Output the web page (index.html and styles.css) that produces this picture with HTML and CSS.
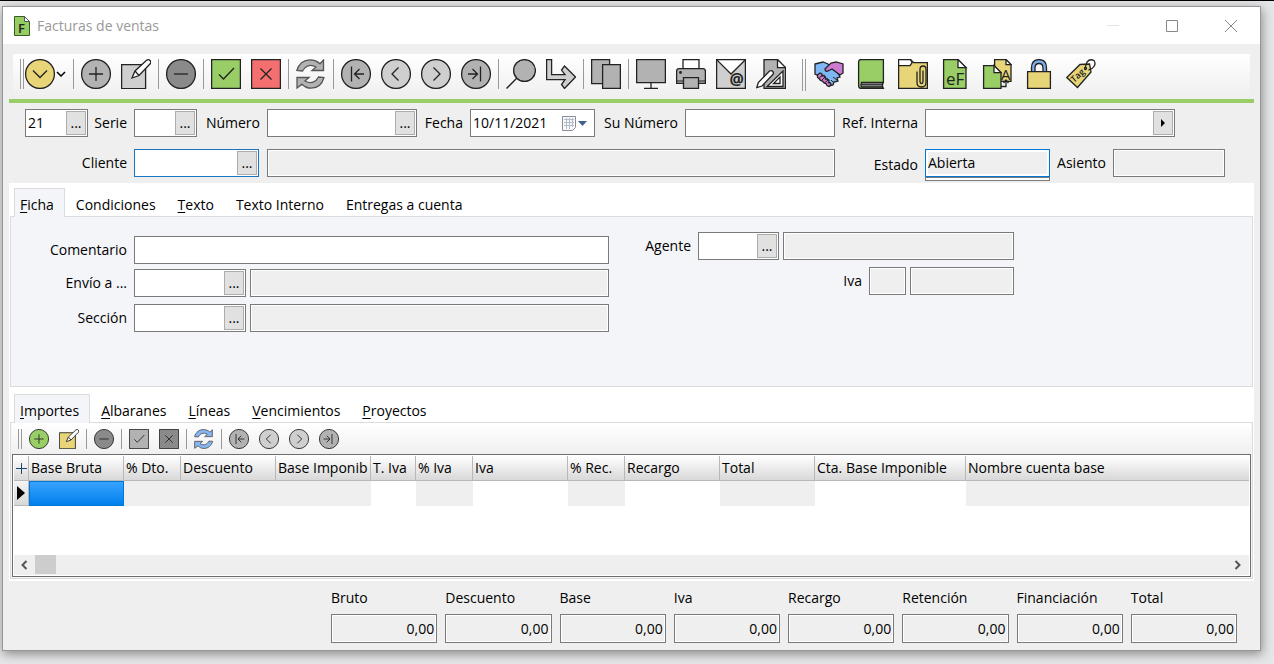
FILE: index.html
```html
<!DOCTYPE html>
<html lang="es">
<head>
<meta charset="utf-8">
<title>Facturas de ventas</title>
<link rel="stylesheet" href="styles.css">
</head>
<body>
<svg class="sprite" aria-hidden="true">
  <symbol id="plus" viewBox="0 0 30 30"><circle class="fill" cx="15" cy="15" r="14.4"/><path d="M15 8v14M8 15h14"/></symbol>
  <symbol id="minus" viewBox="0 0 30 30"><circle class="fill" cx="15" cy="15" r="14.4"/><path d="M8 15h14"/></symbol>
  <symbol id="edit" viewBox="0 0 30 30"><path class="fill" d="M.6 5.6h24v24H.6z"/><path fill="#fff" d="M11 19l3-7L25.5 1.200q2-1.200 3.500.300t.200 3.300L18 16.500z"/><path d="M14 12l4 4.500"/></symbol>
  <symbol id="check" viewBox="0 0 30 30"><path class="fill" d="M.6.6h28.800v28.800H.6z"/><path d="M8 15.500l4.500 4.500L23 9"/></symbol>
  <symbol id="cross" viewBox="0 0 30 30"><path class="fill" d="M.6.6h28.800v28.800H.6z"/><path d="M9.500 9.500l11 11m0-11l-11 11"/></symbol>
  <symbol id="refresh" viewBox="0 0 30 30"><path class="fill" d="M.800 11.500C3 4.500 8 .800 14 .800c4 0 7.500 1.500 10 4L27.500 1v10.500H16l4-3.500C14 4.500 9 7 6.500 12z"/><path class="fill" d="M28 18.500C26 25.500 21 29.200 15 29.200c-4 0-6.500-1.500-9-4L1 29V18.500h12l-4 3.500C15 25.500 20 23 22.500 18z"/></symbol>
  <symbol id="first" viewBox="0 0 30 30"><circle class="fill" cx="15" cy="15" r="14.400"/><path d="M10.500 7.500v15M23 15h-9m4.500-5L13.500 15l5 5"/></symbol>
  <symbol id="last" viewBox="0 0 30 30"><circle class="fill" cx="15" cy="15" r="14.400"/><path d="M19.500 7.500v15M7 15h9m-4.500-5l5 5-5 5"/></symbol>
  <symbol id="prev" viewBox="0 0 30 30"><circle class="fill" cx="15" cy="15" r="14.400"/><path d="M17.500 8.500L11 15l6.500 6.500"/></symbol>
  <symbol id="next" viewBox="0 0 30 30"><circle class="fill" cx="15" cy="15" r="14.400"/><path d="M12.500 8.500L19 15l-6.500 6.500"/></symbol>
</svg>

<main class="window">
  <header class="titlebar">
    <svg class="app-icon" viewBox="0 0 16 20"><path fill="#95cd62" stroke="#3c5a26" d="M.5.5h10l5 5v14H.5z"/><path fill="#fff" stroke="#555" d="M10.500.5v5h5z"/><text x="4" y="17" font-size="13" font-weight="600">F</text></svg>
    <h1>Facturas de ventas</h1>
    <div class="window-buttons">
      <button class="faint" aria-label="Minimizar"><svg viewBox="0 0 12 12"><path d="M0 5.500h12"/></svg></button>
      <button aria-label="Maximizar"><svg viewBox="0 0 12 12"><path d="M.5.5h11v11H.5z"/></svg></button>
      <button aria-label="Cerrar"><svg viewBox="0 0 12 12"><path d="M0 0l12 12M12 0L0 12"/></svg></button>
    </div>
  </header>

  <div class="content">
    <div class="toolbar" role="toolbar" aria-label="Principal">
      <span class="grip"></span>
      <button class="tool menu" aria-label="Menú"><svg class="icon yellow" viewBox="0 0 30 30"><circle class="fill" cx="15" cy="15" r="14.400"/><path d="M8 11.500l7 7 7-7"/></svg><svg class="caret" viewBox="0 0 10 6"><path d="M1 1l4 4 4-4"/></svg></button>
      <span class="sep"></span>
      <button class="tool" aria-label="Añadir"><svg class="icon mid"><use href="#plus"/></svg></button>
      <button class="tool" aria-label="Editar"><svg class="icon light"><use href="#edit"/></svg></button>
      <span class="sep"></span>
      <button class="tool" aria-label="Borrar"><svg class="icon dark"><use href="#minus"/></svg></button>
      <span class="sep"></span>
      <button class="tool" aria-label="Aceptar"><svg class="icon green"><use href="#check"/></svg></button>
      <button class="tool" aria-label="Cancelar"><svg class="icon red"><use href="#cross"/></svg></button>
      <span class="sep"></span>
      <button class="tool" aria-label="Refrescar"><svg class="icon mid soft"><use href="#refresh"/></svg></button>
      <span class="sep"></span>
      <button class="tool" aria-label="Primero"><svg class="icon mid"><use href="#first"/></svg></button>
      <button class="tool" aria-label="Anterior"><svg class="icon light"><use href="#prev"/></svg></button>
      <button class="tool" aria-label="Siguiente"><svg class="icon light"><use href="#next"/></svg></button>
      <button class="tool" aria-label="Último"><svg class="icon mid"><use href="#last"/></svg></button>
      <span class="sep"></span>
      <button class="tool" aria-label="Buscar"><svg class="icon mid" viewBox="0 0 30 30"><path d="M.500 29.500L11.500 18.500"/><circle class="fill" cx="18.500" cy="11.500" r="10.900"/></svg></button>
      <button class="tool" aria-label="Ir a"><svg class="icon light" viewBox="0 0 30 30"><path class="fill" d="M.600.600h5v15h13.400l-3.500-4.500 3-4L29.500 18 18.500 29.500l-3-4L19 20.600H.600z"/></svg></button>
      <span class="sep"></span>
      <button class="tool" aria-label="Copiar"><svg class="icon mid" viewBox="0 0 30 30"><path class="fill" d="M.600.600h18v24H.600z"/><path class="fill" d="M11.600 5.600h17.800v23.800H11.600z"/></svg></button>
      <span class="sep"></span>
      <button class="tool" aria-label="Pantalla"><svg class="icon mid" viewBox="0 0 30 30"><path class="fill" d="M.600.600h28.800v23H.600z"/><path d="M15 24v5M8 29.400h14"/></svg></button>
      <button class="tool" aria-label="Imprimir"><svg class="icon mid" viewBox="0 0 30 30"><path fill="#fff" d="M7 .600h16v10H7z"/><path class="fill" d="M3 9.600h24q2.400 0 2.400 3v11.800H.600V12.600q0-3 2.400-3z"/><path class="thin" d="M1 22h28"/><path class="fill" d="M7.500 18.600h15v10.800h-15z"/><circle cx="4.500" cy="13.500" r=".800"/></svg></button>
      <button class="tool" aria-label="Correo"><svg class="icon light" viewBox="0 0 30 30"><path class="fill" d="M.600.600h28.800v28.800H.600z"/><path fill="#fff" d="M.600.600L15 15 29.400.600z"/><text x="13.500" y="26" font-size="16" font-weight="bold">@</text></svg></button>
      <button class="tool" aria-label="Diseño"><svg class="icon mid" viewBox="0 0 30 30"><path class="fill" d="M8 .600h13.500l8 8v20.800H8z"/><path fill="#fff" d="M21.500.600v8h8z"/><path fill="#fff" d="M11 27.500h16V12z"/><path d="M17.500 24.500h6.500v-6.500z"/><path fill="#fff" d="M.800 28.500l1.500-5L13.500 12q2-1 3.300.500t0 3L6 27z"/></svg></button>
      <span class="grip second"></span>
      <button class="tool wide" aria-label="Acuerdos"><svg class="icon" viewBox="0 0 30 30"><path fill="#7eb8f4" d="M1 5l8-2 5 2 10 9 2 4-3 1 1 3-4 1-1 3-4 1L5 17 1 15z"/><path fill="#cc7bd0" d="M11 10l6-6 5-1 7 2v9l-3 2-8-6-4 2q-3 1-3-2z"/><path fill="#cc7bd0" d="M6 14l2 1v2l2-.500 1.500 1.500v2l2 0 1.500 1.500-.500 2 2 .500.500 2-2 1.500-2-1-1-2-2-.500-1.500-2-2-.500-1.500-2-1.500-1V16z"/><path class="thin" d="M5.500 19l2.500-3M8 21l3-3M10.500 24l3.500-3M17 21l3 3M19 18l4 3"/></svg></button>
      <button class="tool wide" aria-label="Libro"><svg class="icon green" viewBox="0 0 30 30"><path class="fill" d="M5 .600h22.400v22.800l-1.500 3 1.500 3H5q-2.400-.400-2.400-3V3Q2.600.600 5 .600z"/><path fill="#999" d="M5.500 23.500h21v4.500h-21q-1-2.200 0-4.500z"/><path class="thin" d="M5.500 25.700h21"/></svg></button>
      <button class="tool wide" aria-label="Adjuntos"><svg class="icon yellow" viewBox="0 0 30 30"><path class="fill" d="M.600.600h12l3 3h13.800v25.800H.600z"/><path fill="#fff" d="M.600.600h12l1.500 3-2.100 3H.600z"/><path d="M19 12.500v11q0 4.500 4.500 4.500t4.500-4.500v-13q0-3.500-3-3.500t-3 3.500v12q0 2 1.500 2t1.500-2V11.500"/></svg></button>
      <button class="tool wide" aria-label="Factura electrónica"><svg class="icon green" viewBox="0 0 30 30"><path class="fill" d="M3.600.600h14.400l8 8v20.800H3.600z"/><path fill="#fff" d="M18 .600v8h8z"/><text x="6" y="26" font-size="17">eF</text></svg></button>
      <button class="tool wide" aria-label="Albarán a factura"><svg class="icon green" viewBox="0 0 30 30"><path fill="#e7d577" d="M12.600.600h11.400l5 5v16.800h-16.400z"/><path fill="#fff" d="M24 .600v5h5z"/><path class="fill" d="M1.600 6.600h10.400l7 7v15.800H1.600z"/><path fill="#fff" d="M12 6.600v7h7z"/><text x="19" y="21" font-size="15">A</text><path d="M19 27.500h5v-6m-2.500 2.500l2.500-3 2.500 3"/></svg></button>
      <button class="tool wide" aria-label="Bloquear"><svg class="icon yellow" viewBox="0 0 30 30"><path fill="#7eb0ee" d="M7.500 13V9q0-8.400 7.500-8.400T22.500 9v4H19V9q0-4.500-4-4.500T11 9v4z"/><path class="fill" d="M3.600 12.600h22.800v16.800H3.600z"/></svg></button>
      <button class="tool wide" aria-label="Etiquetas"><svg class="icon yellow" viewBox="0 0 30 30"><path class="fill" d="M.800 18.500L14 5.500l9.500-.500 1.500 8L11.500 28.500z"/><path fill="none" d="M19 9l2-6q3-3.500 7-1.500 2 3 0 6-2 3-5.500 3.500"/><circle cx="19.500" cy="9.500" r="1"/><text font-size="9" font-weight="600" transform="translate(8 24) rotate(-42)">Tag</text></svg></button>
    </div>

    <form class="invoice">
      <div class="form-row header-row">
        <div class="field"><input aria-label="Código" value="21"><button type="button">...</button></div>
        <label for="serie">Serie</label>
        <div class="field"><input id="serie"><button type="button">...</button></div>
        <label for="numero">Número</label>
        <div class="field"><input id="numero"><button type="button">...</button></div>
        <label for="fecha">Fecha</label>
        <div class="field"><input id="fecha" value="10/11/2021"><button type="button" class="calendar" aria-label="Calendario"><svg viewBox="0 0 28 18"><path fill="#f7f8fa" stroke="#8c8c94" d="M1.500 2.500h13v11l-3 3h-10z"/><path stroke="#b4bccb" fill="none" d="M3 5.500h10M3 8.500h10M3 11.500h10M5.500 4v11M8.500 4v11M11.500 4v9"/><path fill="#42608f" d="M17 7h9l-4.500 5z"/></svg></button></div>
        <label for="sunumero">Su Número</label>
        <div class="field"><input id="sunumero"></div>
        <label for="ref">Ref. Interna</label>
        <div class="field"><input id="ref"><button type="button" aria-label="Abrir"><svg class="play" viewBox="0 0 4 8"><path d="M0 0l4 4-4 4z"/></svg></button></div>
      </div>
      <div class="form-row client-row">
        <label for="cliente">Cliente</label>
        <div class="field focus"><input id="cliente"><button type="button">...</button></div>
        <div class="field readonly"><input aria-label="Nombre del cliente" readonly></div>
        <label class="tall" for="estado">Estado</label>
        <div class="state"><select id="estado"><option>Abierta</option></select></div>
        <label for="asiento">Asiento</label>
        <div class="field readonly"><input id="asiento" readonly></div>
      </div>
    </form>

    <section class="sheet">
      <div class="tabs" role="tablist">
        <button class="tab active" role="tab" aria-selected="true"><u>F</u>icha</button>
        <button class="tab" role="tab">Condiciones</button>
        <button class="tab" role="tab"><u>T</u>exto</button>
        <button class="tab" role="tab">Texto Interno</button>
        <button class="tab" role="tab">Entregas a cuenta</button>
      </div>
      <div class="panel details">
        <div class="details-left">
          <div class="form-row comment"><label for="comentario">Comentario</label><div class="field"><input id="comentario"></div></div>
          <div class="form-row lookup"><label for="envio">Envío a ...</label><div class="field"><input id="envio"><button type="button">...</button></div><div class="field readonly"><input aria-label="Dirección de envío" readonly></div></div>
          <div class="form-row lookup"><label for="seccion">Sección</label><div class="field"><input id="seccion"><button type="button">...</button></div><div class="field readonly"><input aria-label="Nombre de la sección" readonly></div></div>
        </div>
        <div class="details-right">
          <div class="form-row agent"><label for="agente">Agente</label><div class="field"><input id="agente"><button type="button">...</button></div><div class="field readonly"><input aria-label="Nombre del agente" readonly></div></div>
          <div class="form-row vat"><label for="iva">Iva</label><div class="field readonly"><input id="iva" readonly></div><div class="field readonly"><input aria-label="Tipo de iva" readonly></div></div>
        </div>
      </div>

      <div class="tabs lower" role="tablist">
        <button class="tab active" role="tab" aria-selected="true"><u>I</u>mportes</button>
        <button class="tab" role="tab"><u>A</u>lbaranes</button>
        <button class="tab" role="tab"><u>L</u>íneas</button>
        <button class="tab" role="tab"><u>V</u>encimientos</button>
        <button class="tab" role="tab"><u>P</u>royectos</button>
      </div>
      <div class="panel amounts">
        <div class="toolbar small" role="toolbar" aria-label="Importes">
          <span class="grip"></span>
          <button class="tool" aria-label="Añadir línea"><svg class="icon green"><use href="#plus"/></svg></button>
          <button class="tool" aria-label="Editar línea"><svg class="icon yellow"><use href="#edit"/></svg></button>
          <span class="sep"></span>
          <button class="tool" aria-label="Borrar línea"><svg class="icon dark"><use href="#minus"/></svg></button>
          <span class="sep"></span>
          <button class="tool" aria-label="Aceptar línea"><svg class="icon mid"><use href="#check"/></svg></button>
          <button class="tool" aria-label="Cancelar línea"><svg class="icon dark"><use href="#cross"/></svg></button>
          <span class="sep"></span>
          <button class="tool" aria-label="Refrescar líneas"><svg class="icon blue soft"><use href="#refresh"/></svg></button>
          <span class="sep"></span>
          <button class="tool" aria-label="Primera línea"><svg class="icon mid"><use href="#first"/></svg></button>
          <button class="tool" aria-label="Línea anterior"><svg class="icon light"><use href="#prev"/></svg></button>
          <button class="tool" aria-label="Línea siguiente"><svg class="icon light"><use href="#next"/></svg></button>
          <button class="tool" aria-label="Última línea"><svg class="icon mid"><use href="#last"/></svg></button>
        </div>
        <div class="grid">
          <table>
            <colgroup><col class="c-mark"><col class="c-amount"><col class="c-pct"><col class="c-amount"><col class="c-amount"><col class="c-type"><col class="c-pct"><col class="c-amount"><col class="c-pct"><col class="c-amount"><col class="c-amount"><col class="c-account"><col></colgroup>
            <thead>
              <tr><th class="mark"><svg class="add" viewBox="0 0 11 11"><path d="M5.500 0v11M0 5.500h11"/></svg></th><th>Base Bruta</th><th>% Dto.</th><th>Descuento</th><th>Base Imponib</th><th>T. Iva</th><th>% Iva</th><th>Iva</th><th>% Rec.</th><th>Recargo</th><th>Total</th><th>Cta. Base Imponible</th><th>Nombre cuenta base</th></tr>
            </thead>
            <tbody>
              <tr><td class="mark"><svg class="current" viewBox="0 0 8 14"><path d="M0 0l8 7-8 7z"/></svg></td><td class="selected"></td><td></td><td></td><td></td><td class="open"></td><td></td><td class="open"></td><td></td><td class="open"></td><td></td><td class="open"></td><td></td></tr>
            </tbody>
          </table>
          <div class="scrollbar">
            <button type="button" aria-label="Desplazar a la izquierda"><svg viewBox="0 0 8 10"><path d="M6.500 1l-4 4 4 4"/></svg></button>
            <span class="thumb"></span>
            <button type="button" class="right" aria-label="Desplazar a la derecha"><svg viewBox="0 0 8 10"><path d="M1.500 1l4 4-4 4"/></svg></button>
          </div>
        </div>
      </div>
    </section>

    <footer class="totals">
      <div><label for="t1">Bruto</label><div class="field readonly"><input id="t1" value="0,00" readonly></div></div>
      <div><label for="t2">Descuento</label><div class="field readonly"><input id="t2" value="0,00" readonly></div></div>
      <div><label for="t3">Base</label><div class="field readonly"><input id="t3" value="0,00" readonly></div></div>
      <div><label for="t4">Iva</label><div class="field readonly"><input id="t4" value="0,00" readonly></div></div>
      <div><label for="t5">Recargo</label><div class="field readonly"><input id="t5" value="0,00" readonly></div></div>
      <div><label for="t6">Retención</label><div class="field readonly"><input id="t6" value="0,00" readonly></div></div>
      <div><label for="t7">Financiación</label><div class="field readonly"><input id="t7" value="0,00" readonly></div></div>
      <div><label for="t8">Total</label><div class="field readonly"><input id="t8" value="0,00" readonly></div></div>
    </footer>
  </div>
</main>
</body>
</html>
```
FILE: styles.css
```css
* { box-sizing: border-box; }

body {
  margin: 0;
  min-height: 100vh;
  display: flex;
  padding: 5px 13px 13px 2px;
  border-top: 1px solid #000;
  background: #e6e5e7;
  color: #000;
  font: 14px/20px "Open Sans", "Noto Sans", sans-serif;
}

button, input, select {
  margin: 0;
  padding: 0;
  border: 0;
  border-radius: 0;
  background: none;
  color: inherit;
  font: inherit;
}

.sprite { position: absolute; width: 0; height: 0; }

.window {
  flex: 1;
  min-width: 0;
  display: flex;
  flex-direction: column;
  border: 1px solid #979797;
  background: #efefef;
  box-shadow: 1px 3px 10px rgba(0, 0, 0, .4);
}

/* Title bar */
.titlebar {
  display: flex;
  align-items: center;
  height: 37px;
  padding-left: 11px;
  background: #fff;
}
.app-icon { width: 16px; height: 20px; }
.titlebar h1 {
  flex: 1;
  margin: 0 0 0 7px;
  color: #999;
  font-size: 14px;
  font-weight: 400;
}
.window-buttons { display: flex; }
.window-buttons button {
  display: flex;
  align-items: center;
  justify-content: center;
  width: 59px;
  height: 36px;
}
.window-buttons svg { width: 12px; height: 12px; fill: none; stroke: #888; }
.window-buttons .faint svg { stroke: #e4e4e4; }

.content {
  flex: 1;
  display: flex;
  flex-direction: column;
  padding: 10px 6px 7px;
}

/* Toolbars */
.toolbar {
  display: flex;
  align-items: flex-start;
  margin: 0 4px;
  padding: 5px 0 4px 7px;
  background: linear-gradient(#fff, #f0f0f0);
}
.grip {
  width: 4px;
  height: 30px;
  margin-right: 1px;
  border: solid #999;
  border-width: 0 1px;
}
.grip.second { height: 32px; margin: 0 2px 0 11px; }
.sep { width: 1px; height: 30px; margin: 0 2px; background: #999; }
.tool {
  display: flex;
  align-items: center;
  justify-content: center;
  width: 40px;
  height: 30px;
}
.tool.menu { justify-content: flex-start; width: 46px; }
.tool.wide { width: 42px; }
.icon {
  --fill: #b2b2b2;
  flex: none;
  width: 30px;
  height: 30px;
  stroke: #222;
  stroke-width: 1.3;
  fill: none;
}
.icon .fill, symbol .fill { fill: var(--fill); }
.icon .thin { stroke-width: 1; }
.icon.soft { stroke: #555; }
.icon text, .app-icon text { fill: #222; stroke: none; }
.caret { width: 10px; height: 6px; margin-left: 1px; fill: none; stroke: #000; stroke-width: 1.5; }
.icon.light { --fill: #cfcfcf; }
.icon.dark { --fill: #8a8a8a; }
.icon.green { --fill: #99ce66; }
.icon.yellow { --fill: #e7d577; }
.icon.red { --fill: #f47070; }
.icon.blue { --fill: #84b6f4; }

.toolbar.small { margin: 0; padding: 6px 0 5px 6px; }
.small .grip { height: 20px; margin-right: 2px; }
.small .sep { height: 20px; }
.small .tool { width: 30px; height: 20px; }
.small .icon { width: 20px; height: 20px; }

/* Form fields */
.invoice {
  display: grid;
  gap: 8px;
  margin-top: 4px;
  padding: 6px 0 2px 16px;
  border-top: 4px solid #99ce66;
}
.form-row { display: grid; align-items: start; }
.form-row label { padding-right: 7px; line-height: 28px; text-align: right; white-space: nowrap; }
.header-row {
  grid-template-columns: 63px 46px 63px 70px 150fr 53px 125px 90px 150fr 90px 250fr;
  padding: 0 79px 4px 0;
}
.client-row {
  grid-template-columns: 109px 125px 1fr 90px 125px 63px 112px;
  padding-right: 29px;
}
.client-row .field:nth-child(3) { margin-left: 8px; }
.form-row label.tall { line-height: 32px; }

.field {
  display: flex;
  min-width: 0;
  height: 28px;
  padding: 1px;
  border: 1px solid #7a7a7a;
  background: #fff;
}
.field input { flex: 1; width: 0; min-width: 0; padding: 0 1px; outline: 0; }
.field button {
  display: flex;
  align-items: center;
  justify-content: center;
  width: 20px;
  border: 1px solid #adadad;
  background: #e1e1e1;
}
.field.focus { border-color: #1a74bf; }
.field.readonly input { background: #efefef; }
.field .calendar { width: 36px; border: 0; background: none; }
.calendar svg { width: 28px; height: 18px; }
.play { width: 4px; height: 8px; }

.state { height: 32px; border: 1px solid #7a7a7a; background: #fff; }
.state select {
  display: block;
  width: calc(100% + 2px);
  height: 28px;
  margin: -1px;
  border: 1px solid #0078d7;
  padding: 0 2px;
  background: #efefef;
  box-shadow: inset 0 0 0 2px #fff, 0 1px #7a7a7a;
  appearance: none;
}

/* Tabs */
.sheet { flex: 1; display: flex; flex-direction: column; padding: 5px 1px 2px; background: #fff; }
.tabs { display: flex; padding-left: 4px; }
.tab { height: 28px; padding: 5px 11px 0; line-height: 23px; white-space: nowrap; }
.tab.active {
  z-index: 1;
  height: 29px;
  margin-bottom: -1px;
  padding: 3px 10px 0 5px;
  border: 1px solid #dcdcdc;
  border-bottom: 0;
  background: #f4f5f8;
}
.tabs u { text-underline-offset: 2px; }
.tabs.lower { margin-top: 7px; }
.panel { border: 1px solid #dcdcdc; background: #f4f5f8; }

.details { display: flex; padding: 15px 20px 54px 0; }
.details-left { flex: 0 1 598px; display: grid; gap: 5px; padding-top: 4px; }
.details-right { flex: 0 1 405px; display: grid; align-content: start; gap: 7px; }
.comment { grid-template-columns: 123px 1fr; }
.lookup { grid-template-columns: 123px 112px 1fr; }
.lookup + .lookup { padding-top: 2px; }
.lookup .readonly, .agent .readonly, .vat .field + .field { margin-left: 4px; }
.agent { grid-template-columns: 89px 81px 1fr; }
.vat { grid-template-columns: 1fr 37px 108px; }

/* Amounts grid */
.amounts { flex: 1; display: flex; flex-direction: column; padding: 0 1px 1px; }
.grid {
  flex: 1;
  display: flex;
  flex-direction: column;
  min-height: 120px;
  padding: 1px;
  border: 1px solid #6e6e6e;
  background: #fff;
}
table { width: 100%; table-layout: fixed; border-collapse: separate; border-spacing: 0; }
.c-mark { width: 15px; }
.c-amount { width: 95px; }
.c-pct { width: 57px; }
.c-type { width: 45px; }
.c-account { width: 151px; }
th {
  height: 25px;
  padding: 0 0 0 2px;
  overflow: hidden;
  border: solid #b8b8b8;
  border-width: 0 1px 1px 0;
  background: linear-gradient(#fff, #d8d8d8);
  font-weight: 400;
  text-align: left;
  white-space: nowrap;
}
th:last-child { border-right: 0; }
td { height: 25px; padding: 0; background: #efefef; }
td.open { background: #fff; }
td.selected { border: 1px solid #0078d7; background: linear-gradient(#38a3ff, #0080ec); }
.mark { padding: 0; text-align: center; line-height: 0; }
td.mark { border: solid #b8b8b8; border-width: 0 1px 1px 0; background: linear-gradient(#f4f4f4, #d8d8d8); }
.add { width: 11px; height: 11px; stroke: #17496f; }
.current { width: 8px; height: 14px; }
.scrollbar { display: flex; height: 20px; margin-top: auto; background: #efefef; }
.scrollbar button { display: flex; align-items: center; justify-content: center; width: 21px; padding-right: 2px; }
.scrollbar .right { margin-left: auto; }
.scrollbar svg { width: 8px; height: 10px; fill: none; stroke: #555; stroke-width: 2; }
.thumb { width: 21px; height: 19px; background: #cdcdcd; }

/* Totals */
.totals {
  display: grid;
  grid-template-columns: repeat(8, 1fr);
  gap: 8px;
  padding: 7px 17px 0 322px;
}
.totals label { display: block; margin-bottom: 6px; }
.totals .field { height: 29px; }
.totals input { text-align: right; }
```
